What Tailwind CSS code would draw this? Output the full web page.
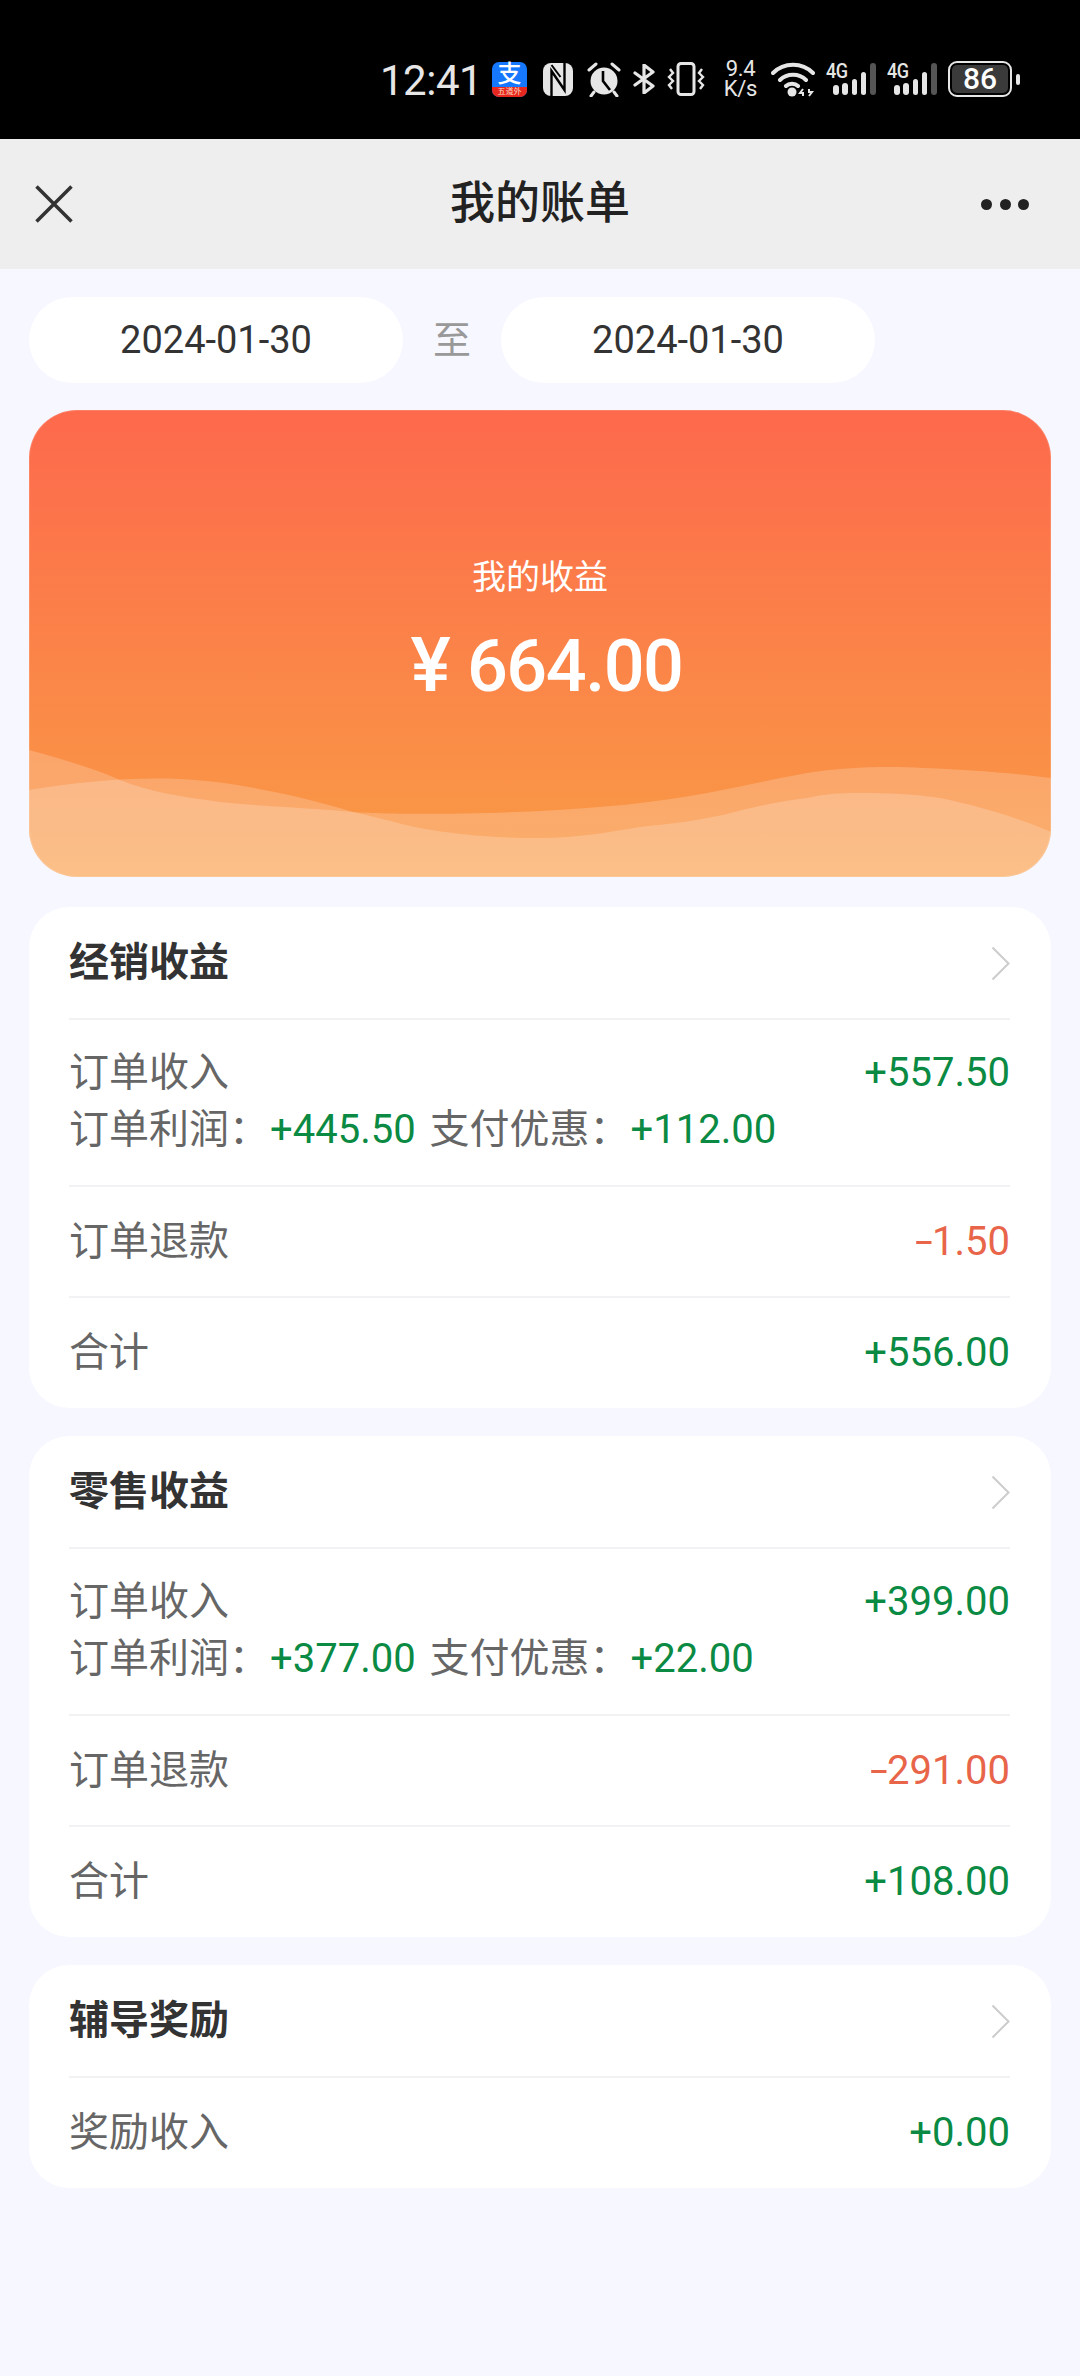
<!doctype html>
<html lang="zh-CN">
<head>
<meta charset="utf-8">
<script src="https://cdn.jsdelivr.net/npm/@tailwindcss/browser@4"></script>
</head>
<body class="m-0">
<div class="w-[1080px] h-[2376px] bg-[#f6f7ff] font-['Roboto','Noto_Sans_CJK_SC',sans-serif] overflow-hidden">

  <!-- status bar -->
  <div class="h-[139px] bg-black flex items-start pl-[380px] pt-[61px] text-[#e6e6e6]">
    <div class="flex items-center h-[36px]">
      <span class="text-[42px] leading-[36px] pt-[4px] w-[112px] tracking-[-0.5px] font-normal">12:41</span>
      <div class="w-[35px] h-[35px] rounded-[7px] bg-[#1677ff] flex flex-col items-center">
        <span class="text-white text-[24px] leading-[25px] h-[25px] font-medium">支</span>
        <span class="w-full h-[10px] rounded-b-[7px] bg-[#e8281e] text-[#ffd9c0] text-[8px] leading-[10px] text-center">五道外</span>
      </div>
      <svg class="ml-[16px]" width="30" height="33" viewBox="0 0 30 33"><rect width="30" height="33" rx="8" fill="#e6e6e6"/><path d="M8.5 33 V8 L21.5 27 V0" fill="none" stroke="#000" stroke-width="2.4"/><path d="M8.5 2 L17.5 14" fill="none" stroke="#000" stroke-width="2"/></svg>
      <svg class="ml-[14px]" width="34" height="35" viewBox="0 0 34 35"><circle cx="17" cy="19" r="13.5" fill="#e6e6e6"/><path d="M16 9 V19 L23 28" fill="none" stroke="#000" stroke-width="2.6"/><path d="M2 8 L9 2 M32 8 L25 2 M7 30 L4 34 M27 30 L30 34" stroke="#e6e6e6" stroke-width="3" stroke-linecap="round"/></svg>
      <svg class="ml-[12px]" width="22" height="30" viewBox="0 0 22 30"><path d="M2 9 L20 22 L11 29 V1 L20 8 L2 21" fill="none" stroke="#e6e6e6" stroke-width="3.2" stroke-linejoin="round" stroke-linecap="round"/></svg>
      <svg class="ml-[12px]" width="38" height="34" viewBox="0 0 38 34"><rect x="11" y="1.5" width="16" height="31" rx="3" fill="none" stroke="#e6e6e6" stroke-width="3"/><path d="M3 7 L6 11 L2 15 L6 19 L2 23 L5 27 M35 7 L32 11 L36 15 L32 19 L36 23 L33 27" fill="none" stroke="#e6e6e6" stroke-width="2.4"/></svg>
      <div class="ml-[19px] w-[33px] flex flex-col items-center text-[22px] leading-[20px] tracking-[-0.3px]"><span>9.4</span><span>K/s</span></div>
      <svg class="ml-[14px]" width="44" height="35" viewBox="0 0 44 35"><path d="M2 11 C13 0 31 0 42 11 M9 18 C16 11 28 11 35 18 M15 24 C18 21 24 21 27 24" fill="none" stroke="#e6e6e6" stroke-width="4" stroke-linecap="round"/><circle cx="21" cy="30" r="4.5" fill="#e6e6e6"/><path d="M32 27 L29 31 H32 V34 M38 34 L41 30 H38 V27" fill="none" stroke="#e6e6e6" stroke-width="2"/></svg>
      <div class="ml-[11px] relative w-[50px] h-[36px] flex items-end gap-[3.8px] pl-[7px] pb-[2px]">
        <span class="absolute left-0 top-0 text-[20px] leading-[20px] font-medium tracking-[-0.5px] scale-x-90 origin-left">4G</span>
        <i class="w-[5.5px] h-[10px] rounded-full bg-[#e6e6e6]"></i><i class="w-[5.5px] h-[12px] rounded-full bg-[#e6e6e6]"></i><i class="w-[5.5px] h-[16px] rounded-full bg-[#e6e6e6]"></i><i class="w-[5.5px] h-[23px] rounded-full bg-[#e6e6e6]"></i><i class="w-[5.5px] h-[32px] rounded-sm bg-[#555]"></i>
      </div>
      <div class="ml-[11px] relative w-[50px] h-[36px] flex items-end gap-[3.8px] pl-[7px] pb-[2px]">
        <span class="absolute left-0 top-0 text-[20px] leading-[20px] font-medium tracking-[-0.5px] scale-x-90 origin-left">4G</span>
        <i class="w-[5.5px] h-[10px] rounded-full bg-[#e6e6e6]"></i><i class="w-[5.5px] h-[12px] rounded-full bg-[#e6e6e6]"></i><i class="w-[5.5px] h-[16px] rounded-full bg-[#e6e6e6]"></i><i class="w-[5.5px] h-[23px] rounded-full bg-[#e6e6e6]"></i><i class="w-[5.5px] h-[32px] rounded-sm bg-[#555]"></i>
      </div>
    </div>
    <div class="ml-[11px] flex items-center h-[36px]">
      <div class="w-[64px] h-[36px] rounded-[9px] border-[2.5px] border-[#e6e6e6] p-[2px]">
        <div class="w-full h-full rounded-[5px] bg-[#3a3a3a] text-[30px] leading-[27px] font-medium text-center text-white">86</div>
      </div>
      <i class="ml-[4px] w-[4px] h-[11px] rounded-full bg-[#e6e6e6]"></i>
    </div>
  </div>

  <!-- nav -->
  <div class="h-[130px] bg-[#eeeeee] flex items-center pl-[35px] pr-[51px]">
    <div class="flex-1"><svg width="38" height="38" viewBox="0 0 38 38"><path d="M1.5 1.5 L36.5 36.5 M36.5 1.5 L1.5 36.5" fill="none" stroke="#333" stroke-width="3.5"/></svg></div>
    <span class="text-[45px] leading-[60px] font-medium text-[#222] mr-[-16px]">我的账单</span>
    <div class="flex-1 flex justify-end gap-[7.5px]"><i class="w-[11px] h-[11px] rounded-full bg-[#222]"></i><i class="w-[11px] h-[11px] rounded-full bg-[#222]"></i><i class="w-[11px] h-[11px] rounded-full bg-[#222]"></i></div>
  </div>

  <div class="px-[29px] pt-[28px]">
    <!-- dates -->
    <div class="flex items-center">
      <div class="w-[374px] h-[86px] rounded-[43px] bg-white flex items-center justify-center text-[38px] text-[#333]">2024-01-30</div>
      <span class="w-[98px] text-center text-[38px] text-[#999]">至</span>
      <div class="w-[374px] h-[86px] rounded-[43px] bg-white flex items-center justify-center text-[38px] text-[#333]">2024-01-30</div>
    </div>

    <!-- hero -->
    <div class="relative mt-[27px] h-[467px] rounded-[48px] overflow-hidden bg-linear-to-b/srgb from-[#fd694c] to-[#f99c45] ring-1 ring-inset ring-white/15 text-white text-center">
      <svg class="absolute left-0 top-0" width="1022" height="467" viewBox="0 0 1022 467">
        <path d="M0 340 C35 350 65 358 91 370 C120 382 155 387 191 392 C240 397 285 398 324 402 C360 410 390 420 424 423 C455 427 480 428 511 428 C550 428 580 422 611 417 C640 414 665 411 694 405 C725 397 750 391 778 388 C795 384 810 383 828 383 C860 383 885 384 911 388 C950 396 990 408 1022 422 V467 H0 Z" fill="#ffffff" fill-opacity="0.2"/>
        <path d="M0 380 C50 372 100 367 151 369 C200 371 270 385 324 402 C365 405 440 404 511 401 C570 398 625 393 678 383 C715 376 745 369 778 363 C815 357 860 356 894 358 C950 360 990 364 1022 368 V467 H0 Z" fill="#ffffff" fill-opacity="0.2"/>
      </svg>
      <div class="relative pt-[143px] text-[34px] leading-[48px]">我的收益</div>
      <div class="relative mt-[24px] leading-[80px] font-medium pl-[13px]"><span class="text-[76px] mr-[16px]">¥</span><span class="text-[72px] tracking-[-1.5px]">664.00</span></div>
    </div>

    <!-- card 1 -->
    <div class="mt-[30px] rounded-[40px] bg-white pl-[40px] pr-[41px] text-[40px] leading-[56px] text-[#666]">
      <div class="h-[113px] pt-[1px] flex items-center justify-between border-b-2 border-[#f2f2f4]">
        <span class="font-bold text-[#333]">经销收益</span>
        <svg width="19" height="35" viewBox="0 0 19 35"><path d="M1.5 1.5 L17.5 17.5 L1.5 33.5" fill="none" stroke="#cccccc" stroke-width="2"/></svg>
      </div>
      <div class="h-[167px] pt-[25px] border-b-2 border-[#f2f2f4]">
        <div class="flex justify-between"><span>订单收入</span><span class="text-[#0a8a43]">+557.50</span></div>
        <div class="mt-[1px]">订单利润：<span class="ml-[1px] text-[#0a8a43]">+445.50</span> <span class="ml-[4px]">支付优惠：</span><span class="ml-[1px] text-[#0a8a43]">+112.00</span></div>
      </div>
      <div class="h-[111px] flex items-center justify-between border-b-2 border-[#f2f2f4]"><span>订单退款</span><span class="text-[#e8654a]"><span class="inline-block w-[17px] origin-left scale-x-[1.6]">-</span>1.50</span></div>
      <div class="h-[110px] flex items-center justify-between"><span>合计</span><span class="text-[#0a8a43]">+556.00</span></div>
    </div>

    <!-- card 2 -->
    <div class="mt-[28px] rounded-[40px] bg-white pl-[40px] pr-[41px] text-[40px] leading-[56px] text-[#666]">
      <div class="h-[113px] pt-[1px] flex items-center justify-between border-b-2 border-[#f2f2f4]">
        <span class="font-bold text-[#333]">零售收益</span>
        <svg width="19" height="35" viewBox="0 0 19 35"><path d="M1.5 1.5 L17.5 17.5 L1.5 33.5" fill="none" stroke="#cccccc" stroke-width="2"/></svg>
      </div>
      <div class="h-[167px] pt-[25px] border-b-2 border-[#f2f2f4]">
        <div class="flex justify-between"><span>订单收入</span><span class="text-[#0a8a43]">+399.00</span></div>
        <div class="mt-[1px]">订单利润：<span class="ml-[1px] text-[#0a8a43]">+377.00</span> <span class="ml-[4px]">支付优惠：</span><span class="ml-[1px] text-[#0a8a43]">+22.00</span></div>
      </div>
      <div class="h-[111px] flex items-center justify-between border-b-2 border-[#f2f2f4]"><span>订单退款</span><span class="text-[#e8654a]"><span class="inline-block w-[17px] origin-left scale-x-[1.6]">-</span>291.00</span></div>
      <div class="h-[110px] flex items-center justify-between"><span>合计</span><span class="text-[#0a8a43]">+108.00</span></div>
    </div>

    <!-- card 3 -->
    <div class="mt-[28px] rounded-[40px] bg-white pl-[40px] pr-[41px] text-[40px] leading-[56px] text-[#666]">
      <div class="h-[113px] pt-[1px] flex items-center justify-between border-b-2 border-[#f2f2f4]">
        <span class="font-bold text-[#333]">辅导奖励</span>
        <svg width="19" height="35" viewBox="0 0 19 35"><path d="M1.5 1.5 L17.5 17.5 L1.5 33.5" fill="none" stroke="#cccccc" stroke-width="2"/></svg>
      </div>
      <div class="h-[110px] flex items-center justify-between"><span>奖励收入</span><span class="text-[#0a8a43]">+0.00</span></div>
    </div>
  </div>
</div>
</body>
</html>
